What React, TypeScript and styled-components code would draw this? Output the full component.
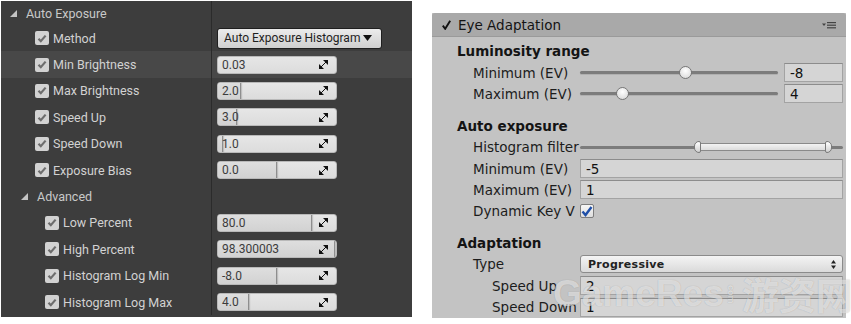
import styled, { createGlobalStyle } from 'styled-components';

const GlobalStyle = createGlobalStyle`
  html, body {
    margin: 0;
    padding: 0;
    background: #ffffff;
  }
  body {
    width: 851px;
    height: 324px;
    overflow: hidden;
  }
`;

interface IUeProp {
  name: string;
  value: string;
  fill: number;
  level: number;
  hl?: boolean;
}

const autoProps: IUeProp[] = [
  { name: 'Min Brightness', value: '0.03', fill: 0, level: 1, hl: true },
  { name: 'Max Brightness', value: '2.0', fill: 19, level: 1 },
  { name: 'Speed Up', value: '3.0', fill: 15, level: 1 },
  { name: 'Speed Down', value: '1.0', fill: 3, level: 1 },
  { name: 'Exposure Bias', value: '0.0', fill: 49, level: 1 },
];

const advancedProps: IUeProp[] = [
  { name: 'Low Percent', value: '80.0', fill: 79, level: 2 },
  { name: 'High Percent', value: '98.300003', fill: 98, level: 2 },
  { name: 'Histogram Log Min', value: '-8.0', fill: 49, level: 2 },
  { name: 'Histogram Log Max', value: '4.0', fill: 25, level: 2 },
];

const Tri = () => (
  <svg width="7" height="7" viewBox="0 0 7 7">
    <polygon points="7,0 7,7 0,7" fill="#c4c4c4" />
  </svg>
);

const UeCheck = () => (
  <UeBox>
    <svg width="10" height="9" viewBox="0 0 10 9">
      <polyline points="1.5,4.8 3.8,7.2 8.6,1.6" fill="none" stroke="#6d6d6d" strokeWidth="2.2" />
    </svg>
  </UeBox>
);

// the little spin arrows at the right end of each numeric field
const DragIcon = () => (
  <svg width="9" height="9" viewBox="0 0 9 9">
    <polygon points="9,0 9,5 4,0" fill="#111" />
    <polygon points="0,9 0,4 5,9" fill="#111" />
    <line x1="2" y1="7" x2="7" y2="2" stroke="#111" strokeWidth="1" />
  </svg>
);

const UeField = ({ value, fill }: { value: string; fill: number }) => (
  <Field>
    {fill > 0 && <FieldFill style={{ width: `${fill}%` }} />}
    <FieldText>{value}</FieldText>
    <DragWrap>
      <DragIcon />
    </DragWrap>
  </Field>
);

const UeProperty = ({ p }: { p: IUeProp }) => (
  <UeRow $hl={p.hl}>
    <NameCell $indent={p.level === 1 ? 34 : 44}>
      <UeCheck />
      <UeLabel>{p.name}</UeLabel>
    </NameCell>
    <ValueCell>
      <UeField value={p.value} fill={p.fill} />
    </ValueCell>
  </UeRow>
);

const UnitySlider = ({ pos }: { pos: number }) => (
  <Track>
    <Thumb style={{ left: `${pos}%` }} />
  </Track>
);

const App = () => {
  return (
    <Page>
      <GlobalStyle />
      <UePanel>
        <UeRow $first>
          <NameCell $indent={9}>
            <Tri />
            <CategoryLabel>Auto Exposure</CategoryLabel>
          </NameCell>
          <ValueCell />
        </UeRow>
        <UeRow>
          <NameCell $indent={34}>
            <UeCheck />
            <UeLabel>Method</UeLabel>
          </NameCell>
          <ValueCell>
            <Combo>
              Auto Exposure Histogram
              <svg width="9" height="6" viewBox="0 0 9 6">
                <polygon points="0,0 9,0 4.5,6" fill="#111" />
              </svg>
            </Combo>
          </ValueCell>
        </UeRow>
        {autoProps.map((p) => (
          <UeProperty key={p.name} p={p} />
        ))}
        <UeRow>
          <NameCell $indent={20}>
            <Tri />
            <CategoryLabel>Advanced</CategoryLabel>
          </NameCell>
          <ValueCell />
        </UeRow>
        {advancedProps.map((p) => (
          <UeProperty key={p.name} p={p} />
        ))}
      </UePanel>

      <UnityPanel>
        <Header>
          <HeaderCheck>
            <svg width="9" height="10" viewBox="0 0 9 10">
              <path d="M0.8 5.6 L3.2 8.8 L8.2 0.8" fill="none" stroke="#111" strokeWidth="1.9" />
            </svg>
          </HeaderCheck>
          <HeaderTitle>Eye Adaptation</HeaderTitle>
          <HeaderMenu>
            <svg width="14" height="8" viewBox="0 0 14 8">
              <polygon points="0,2.5 4,2.5 2,5" fill="#444" />
              <rect x="5" y="1" width="9" height="1.2" fill="#444" />
              <rect x="5" y="3.6" width="9" height="1.2" fill="#444" />
              <rect x="5" y="6.2" width="9" height="1.2" fill="#444" />
            </svg>
          </HeaderMenu>
        </Header>
        <Body>
          <Section>
            <Heading>Luminosity range</Heading>
            <URow>
              <ULabel>Minimum (EV)</ULabel>
              <SliderCell>
                <UnitySlider pos={53} />
                <NumBox>-8</NumBox>
              </SliderCell>
            </URow>
            <URow>
              <ULabel>Maximum (EV)</ULabel>
              <SliderCell>
                <UnitySlider pos={21} />
                <NumBox>4</NumBox>
              </SliderCell>
            </URow>
          </Section>
          <Section>
            <Heading>Auto exposure</Heading>
            <URow>
              <ULabel>Histogram filter</ULabel>
              <RangeTrack>
                <RangeFill style={{ left: '44%', right: '5%' }}>
                  <RangeCap $side="left" />
                  <RangeCap $side="right" />
                </RangeFill>
              </RangeTrack>
            </URow>
            <URow>
              <ULabel>Minimum (EV)</ULabel>
              <TextBox>-5</TextBox>
            </URow>
            <URow>
              <ULabel>Maximum (EV)</ULabel>
              <TextBox>1</TextBox>
            </URow>
            <URow>
              <ULabel>Dynamic Key V</ULabel>
              <UBox>
                <svg width="12" height="11" viewBox="0 0 12 11">
                  <polyline points="1.5,5.5 4.5,9 10.5,1" fill="none" stroke="#1f4fa8" strokeWidth="2.4" />
                </svg>
              </UBox>
            </URow>
          </Section>
          <Section>
            <Heading>Adaptation</Heading>
            <URow>
              <ULabel>Type</ULabel>
              <Popup>
                Progressive
                <PopupArrow>
                  <svg width="5" height="9" viewBox="0 0 5 9">
                    <polygon points="0,3.5 2.5,0 5,3.5" fill="#222" />
                    <polygon points="0,5.5 2.5,9 5,5.5" fill="#222" />
                  </svg>
                </PopupArrow>
              </Popup>
            </URow>
            <URow>
              <ULabel $sub>Speed Up</ULabel>
              <TextBox>2</TextBox>
            </URow>
            <URow>
              <ULabel $sub>Speed Down</ULabel>
              <TextBox>1</TextBox>
            </URow>
          </Section>
        </Body>
      </UnityPanel>

      <Watermark>
        GameRes
        <WmCom>com</WmCom>
        游资网
      </Watermark>
    </Page>
  );
};

const Page = styled.div`
  position: relative;
  display: flex;
  align-items: flex-start;
  width: 851px;
  height: 324px;
`;

/* ---- Unreal side ---- */

const UePanel = styled.div`
  width: 411px;
  height: 316px;
  margin: 1px 0 0 1px;
  background: #3d3d3d;
  font-family: Roboto, 'Liberation Sans', sans-serif;
  font-size: 12px;
  color: #cdcdcd;
`;

const UeRow = styled.div<{ $hl?: boolean; $first?: boolean }>`
  display: grid;
  grid-template-columns: 211px 1fr;
  height: ${(p) => (p.$first ? 24 : 26.4)}px;
  background: ${(p) => (p.$hl ? '#484848' : 'transparent')};
`;

const NameCell = styled.div<{ $indent: number }>`
  display: flex;
  align-items: center;
  gap: 4px;
  padding-left: ${(p) => p.$indent}px;
  border-right: 1px solid #2b2b2b;
  white-space: nowrap;
`;

const CategoryLabel = styled.span`
  margin-left: 5px;
  font-size: 12.5px;
  color: #c9c9c9;
`;

const UeLabel = styled.span`
  font-size: 12.5px;
  color: #d2d2d2;
`;

const UeBox = styled.span`
  display: inline-flex;
  align-items: center;
  justify-content: center;
  width: 14px;
  height: 14px;
  border-radius: 2px;
  background: #d2d2d2;
`;

const ValueCell = styled.div`
  display: flex;
  align-items: center;
  padding-left: 5px;
`;

const Field = styled.div`
  position: relative;
  display: flex;
  align-items: center;
  width: 120px;
  height: 18px;
  box-sizing: border-box;
  border-radius: 3px;
  border: 1px solid #b9b9b9;
  background: linear-gradient(#e6e6e6, #dcdcdc);
  overflow: hidden;
`;

const FieldFill = styled.div`
  position: absolute;
  left: 0;
  top: 0;
  bottom: 0;
  background: linear-gradient(#dedede, #d2d2d2);
  border-right: 1px solid #8e8e8e;
  box-shadow: 1px 0 1px rgba(0, 0, 0, 0.15);
`;

const FieldText = styled.span`
  position: relative;
  flex: 1;
  padding-left: 4px;
  color: #3c3c3c;
  font-size: 12px;
`;

const DragWrap = styled.span`
  position: relative;
  display: flex;
  margin-right: 8px;
`;

const Combo = styled.div`
  display: flex;
  align-items: center;
  gap: 3px;
  width: 165px;
  height: 21px;
  box-sizing: border-box;
  padding-left: 6px;
  border: 1px solid #1f1f1f;
  border-radius: 3px;
  background: linear-gradient(#ececec, #cfcfcf);
  color: #1e1e1e;
  font-size: 12px;
  white-space: nowrap;
`;

/* ---- Unity side ---- */

const UnityPanel = styled.div`
  width: 414px;
  height: 305px;
  margin: 13px 0 0 20px;
  background: #c3c3c3;
  font-family: 'DejaVu Sans', 'Liberation Sans', sans-serif;
  font-size: 13.5px;
  color: #141414;
`;

const Header = styled.div`
  display: flex;
  align-items: center;
  height: 23px;
  padding: 0 8px 0 10px;
  border-radius: 3px 3px 0 0;
  background: #a9a9a9;
  box-shadow: 0 1px 0 #9a9a9a;
`;

const HeaderCheck = styled.span`
  display: flex;
  margin-right: 7px;
`;

const HeaderTitle = styled.span`
  flex: 1;
`;

const HeaderMenu = styled.span`
  display: flex;
  margin-right: 2px;
`;

const Body = styled.div`
  padding: 4px 3px 0 25px;
`;

const Section = styled.div`
  & + & {
    margin-top: 10px;
  }
`;

const Heading = styled.div`
  height: 22px;
  line-height: 22px;
  font-weight: bold;
`;

const URow = styled.div`
  display: grid;
  grid-template-columns: 123px 1fr;
  align-items: center;
  height: 21.3px;
`;

const ULabel = styled.span<{ $sub?: boolean }>`
  padding-left: ${(p) => (p.$sub ? 35 : 16)}px;
  white-space: nowrap;
  overflow: hidden;
  color: #1c1c1c;
`;

const SliderCell = styled.div`
  display: flex;
  align-items: center;
  gap: 6px;
`;

const Track = styled.div`
  position: relative;
  flex: 1;
  height: 3px;
  border-radius: 2px;
  background: #7c7c7c;
  box-shadow: 0 1px 0 #b0b0b0;
`;

const Thumb = styled.span`
  position: absolute;
  top: 50%;
  width: 11px;
  height: 11px;
  margin: -6.5px 0 0 -6px;
  border-radius: 50%;
  border: 1px solid #777;
  background: radial-gradient(circle at 50% 35%, #ffffff, #d4d4d4);
`;

const TextBox = styled.div`
  display: flex;
  align-items: center;
  height: 19px;
  box-sizing: border-box;
  padding-left: 5px;
  border: 1px solid #a3a3a3;
  border-top-color: #8c8c8c;
  background: #d5d5d5;
  color: #111;
`;

const NumBox = styled(TextBox)`
  width: 59px;
`;

const RangeTrack = styled.div`
  position: relative;
  height: 3px;
  border-radius: 2px;
  background: #7c7c7c;
`;

const RangeFill = styled.span`
  position: absolute;
  top: -3px;
  height: 8px;
  box-sizing: border-box;
  border: 1px solid #8a8a8a;
  border-radius: 4px;
  background: linear-gradient(#f3f3f3, #dcdcdc);
`;

const RangeCap = styled.span<{ $side: 'left' | 'right' }>`
  position: absolute;
  top: -3px;
  ${(p) => p.$side}: -3px;
  width: 7px;
  height: 12px;
  box-sizing: border-box;
  border: 1px solid #7a7a7a;
  border-radius: ${(p) => (p.$side === 'left' ? '5px 2px 2px 5px' : '2px 5px 5px 2px')};
  background: linear-gradient(#ffffff, #d0d0d0);
`;

const UBox = styled.span`
  display: inline-flex;
  align-items: center;
  justify-content: center;
  width: 14px;
  height: 14px;
  box-sizing: border-box;
  border: 1px solid #7d7d7d;
  border-radius: 2px;
  background: linear-gradient(#f6f6f6, #dedede);
`;

const Popup = styled.div`
  display: flex;
  align-items: center;
  height: 18px;
  box-sizing: border-box;
  padding: 0 6px 0 7px;
  border: 1px solid #8b8b8b;
  border-radius: 3px;
  background: linear-gradient(#f4f4f4, #dadada);
  font-size: 11px;
  font-weight: bold;
  letter-spacing: 0.3px;
  color: #222;
`;

const PopupArrow = styled.span`
  display: flex;
  margin-left: auto;
`;

const Watermark = styled.div`
  position: absolute;
  left: 553px;
  top: 267px;
  display: flex;
  align-items: center;
  font-family: 'Liberation Sans', 'Noto Sans CJK SC', sans-serif;
  font-size: 37px;
  font-weight: bold;
  color: rgba(255, 255, 255, 0.6);
  text-shadow: 0 0 1px rgba(0, 0, 0, 0.25);
  pointer-events: none;
  white-space: nowrap;
`;

const WmCom = styled.span`
  writing-mode: vertical-rl;
  font-size: 9px;
  margin: 0 6px 0 2px;
`;

export default App;
